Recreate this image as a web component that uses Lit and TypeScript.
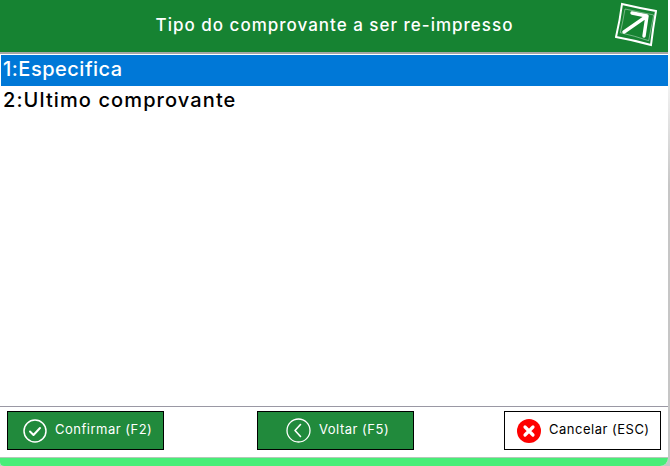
import { LitElement, html, css } from 'lit';
import { customElement } from 'lit/decorators.js';

@customElement('app-root')
export class AppRoot extends LitElement {
  static styles = css`
    :host {
      display: block;
      width: 670px;
      height: 466px;
      background: linear-gradient(#fff 12%, #c6c6c6 40%);
      font-family: Inter, "Liberation Sans", sans-serif;
      overflow: hidden;
    }

    .frame {
      display: flex;
      flex-direction: column;
      width: 668px;
      height: 466px;
      background: #fff;
      border-radius: 0 0 8px 4px;
      overflow: hidden;
    }

    .header {
      height: 49px;
      flex: none;
      background: #168332;
      border-bottom: 2px solid #a6a6a6;
      display: flex;
      align-items: center;
      justify-content: center;
      position: relative;
      color: #fff;
      font-size: 17px;
      font-weight: 500;
      letter-spacing: 1px;
      padding: 0 0 3px 1px;
    }

    .logo {
      position: absolute;
      right: 11px;
      top: 2px;
    }

    .list {
      flex: 1;
      padding: 1px 0 0 1px;
      font-size: 20px;
      font-weight: 500;
      letter-spacing: 1.1px;
      color: #000;
    }

    .item {
      height: 31px;
      line-height: 29px;
      padding-left: 2px;
    }

    .item.selected {
      background: #0078d7;
      color: #fff;
      letter-spacing: 0.5px;
    }

    .footer {
      height: 52px;
      flex: none;
      box-sizing: border-box;
      border-top: 1px solid #9a98a4;
      padding: 4px 7px 0;
      display: flex;
      align-items: flex-start;
    }

    .btn {
      box-sizing: border-box;
      flex: none;
      width: 157px;
      height: 39px;
      border: 1px solid #000;
      background: #218a3c;
      color: #fff;
      display: flex;
      align-items: center;
      gap: 8px;
      padding-left: 15px;
      font-size: 13px;
      letter-spacing: 0.5px;
    }

    .btn.back {
      padding-left: 28px;
      margin-left: 93px;
    }

    .btn.cancel {
      background: #fff;
      color: #000;
      padding-left: 12px;
      margin-left: auto;
    }

    .btn svg {
      flex: none;
    }

    .btn span {
      margin-top: -3px;
    }

    .strip {
      height: 9px;
      flex: none;
      background: #48ed78;
      margin-top: -1px;
      box-sizing: border-box;
      border-top: 1px solid #b4c8b8;
    }
  `;

  render() {
    return html`
      <div class="frame">
        <div class="header">
          Tipo do comprovante a ser re-impresso
          <svg class="logo" width="42" height="46" viewBox="0 0 42 46" fill="none" stroke="#fff">
            <path d="M7 2 Q24 6 41 9 Q38 26 36 43 Q18 38 1 35 Q5 18 7 2 Z" stroke-width="2" />
            <path d="M10 7 Q24 10 38.700 13 Q36 26 33.700 38.700 Q20 34 5.300 30.700 Q8 19 10 7 Z" stroke-width="1" opacity=".4" />
            <path d="M9 30 L32 14 M17 11 L32 14 L29 34" stroke-width="3.400" stroke-linecap="round" stroke-linejoin="round" />
          </svg>
        </div>
        <div class="list">
          <div class="item selected">1:Especifica</div>
          <div class="item">2:Ultimo comprovante</div>
        </div>
        <div class="footer">
          <div class="btn">
            <svg width="24" height="24" viewBox="0 0 24 24" fill="none" stroke="#fff" stroke-width="1.5">
              <circle cx="12" cy="12" r="11" />
              <path d="M7 12.500 L10.500 16 L17 9" stroke-width="2" stroke-linecap="round" stroke-linejoin="round" />
            </svg>
            <span>Confirmar (F2)</span>
          </div>
          <div class="btn back">
            <svg width="25" height="25" viewBox="0 0 25 25" fill="none" stroke="#fff" stroke-width="1.3">
              <circle cx="12.500" cy="12.500" r="11.500" />
              <path d="M14.500 6.500 L9 12.500 L14.500 18.500" stroke-width="1.6" stroke-linecap="round" stroke-linejoin="round" />
            </svg>
            <span>Voltar (F5)</span>
          </div>
          <div class="btn cancel">
            <svg width="24" height="24" viewBox="0 0 24 24">
              <circle cx="12" cy="12" r="12" fill="#fe0000" />
              <path d="M8 8 L16 16 M16 8 L8 16" stroke="#fff" stroke-width="3.200" stroke-linecap="round" />
            </svg>
            <span>Cancelar (ESC)</span>
          </div>
        </div>
        <div class="strip"></div>
      </div>
    `;
  }
}
